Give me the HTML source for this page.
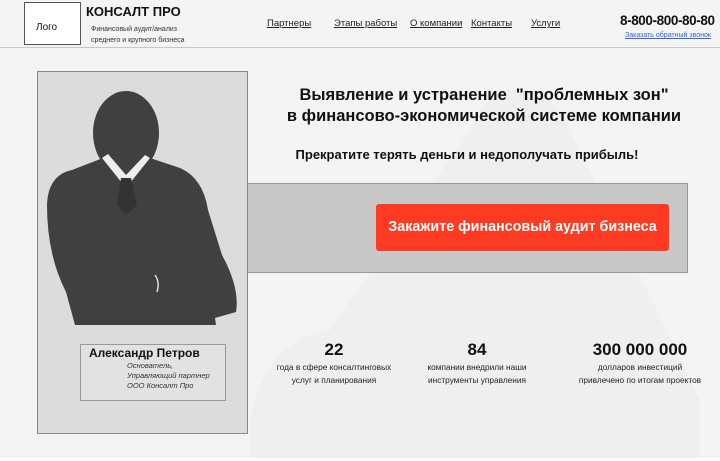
<!DOCTYPE html>
<html><head><meta charset="utf-8"><style>
*{margin:0;padding:0;box-sizing:border-box}
body{width:720px;height:461px;overflow:hidden;background:#f4f4f4;font-family:"Liberation Sans",Arial,sans-serif;color:#111;position:relative}
.a{position:absolute;white-space:nowrap}
header{position:absolute;left:0;top:0;width:720px;height:48px;border-bottom:1px solid #c8c8c8;background:#f4f4f4}
.nav a{position:absolute;top:18px;font-size:9.5px;color:#222;text-decoration:underline}
.c{text-align:center}
</style></head><body>
<svg class="a" style="left:0;top:0" width="720" height="461">
<path d="M250,420 Q265,340 330,330 L470,130 Q500,60 560,110 L700,400 L700,458 L250,458 Z" fill="#efefef"/>
<rect x="0" y="458" width="720" height="3" fill="#fff"/>
</svg>
<header>
<div class="a" style="left:24px;top:2px;width:57px;height:43px;border:1px solid #555;background:#fff;font-size:10px;padding:19px 0 0 11px">Лого</div>
<div class="a" style="left:86px;top:4px;font-size:13px;font-weight:bold">КОНСАЛТ ПРО</div>
<div class="a" style="left:91px;top:25px;font-size:7px;line-height:10.5px;color:#333">Финансовый аудит/анализ<br>среднего и крупного бизнеса</div>
<div class="nav">
<a style="left:267px">Партнеры</a><a style="left:334px">Этапы работы</a><a style="left:410px">О компании</a><a style="left:471px">Контакты</a><a style="left:531px">Услуги</a>
</div>
<div class="a" style="left:620px;top:13px;font-size:13.5px;font-weight:bold;letter-spacing:-0.4px">8-800-800-80-80</div>
<div class="a" style="left:625px;top:32px;font-size:7px;color:#3366dd;text-decoration:underline">Заказать обратный звонок</div>
</header>
<div class="a" style="left:247px;top:183px;width:441px;height:90px;background:#c8c8c8;border:1px solid #999"></div>
<div class="a" style="left:376px;top:204px;width:293px;height:47px;background:#ff3a22;border-radius:3px;color:#fff;font-weight:bold;font-size:14.3px;text-align:center;line-height:47px">Закажите финансовый аудит бизнеса</div>
<div class="a" style="left:37px;top:71px;width:211px;height:363px;background:#dcdcdc;border:1px solid #888"></div>
<svg class="a" style="left:0;top:0" width="260" height="340">
<path d="M47,205 Q48,175 72,170 L103,158 L126,185 L150,158 L180,168 Q203,178 208,210 L222,255 Q240,288 236,312 L215,318 L216,325 L75,325 L66,292 Q47,255 47,205 Z" fill="#404040"/>
<ellipse cx="126" cy="133" rx="33" ry="42" fill="#404040"/>
<path d="M102,158 L126,188 L150,158 L145,155 L126,175 L108,154 Z" fill="#eee"/>
<path d="M121,178 L131,178 L137,205 L126,215 L117,205 Z" fill="#333"/>
<path d="M155,275 Q160,282 157,292" stroke="#ddd" stroke-width="1.5" fill="none"/>
</svg>
<div class="a" style="left:80px;top:344px;width:146px;height:57px;border:1px solid #999;background:#e2e2e2"></div>
<div class="a" style="left:89px;top:346px;font-size:12px;font-weight:bold">Александр Петров</div>
<div class="a" style="left:127px;top:361px;font-size:7.5px;font-style:italic;line-height:10px;color:#333">Основатель,<br>Управляющий партнер<br>ООО Консалт Про</div>
<div class="a c" style="left:250px;top:85px;width:468px;font-size:16.5px;font-weight:bold;line-height:21px">Выявление и устранение &nbsp;"проблемных зон"<br>в финансово-экономической системе компании</div>
<div class="a c" style="left:232px;top:147px;width:470px;font-size:13px;font-weight:bold">Прекратите терять деньги и недополучать прибыль!</div>
<div class="a c" style="left:256px;top:340px;width:156px"><div style="font-size:17px;font-weight:bold">22</div><div style="font-size:8.3px;line-height:13px;color:#222;margin-top:1px">года в сфере консалтинговых<br>услуг и планирования</div></div>
<div class="a c" style="left:399px;top:340px;width:156px"><div style="font-size:17px;font-weight:bold">84</div><div style="font-size:8.3px;line-height:13px;color:#222;margin-top:1px">компании внедрили наши<br>инструменты управления</div></div>
<div class="a c" style="left:562px;top:340px;width:156px"><div style="font-size:17px;font-weight:bold">300 000 000</div><div style="font-size:8.3px;line-height:13px;color:#222;margin-top:1px">долларов инвестиций<br>привлечено по итогам проектов</div></div>
</body></html>
